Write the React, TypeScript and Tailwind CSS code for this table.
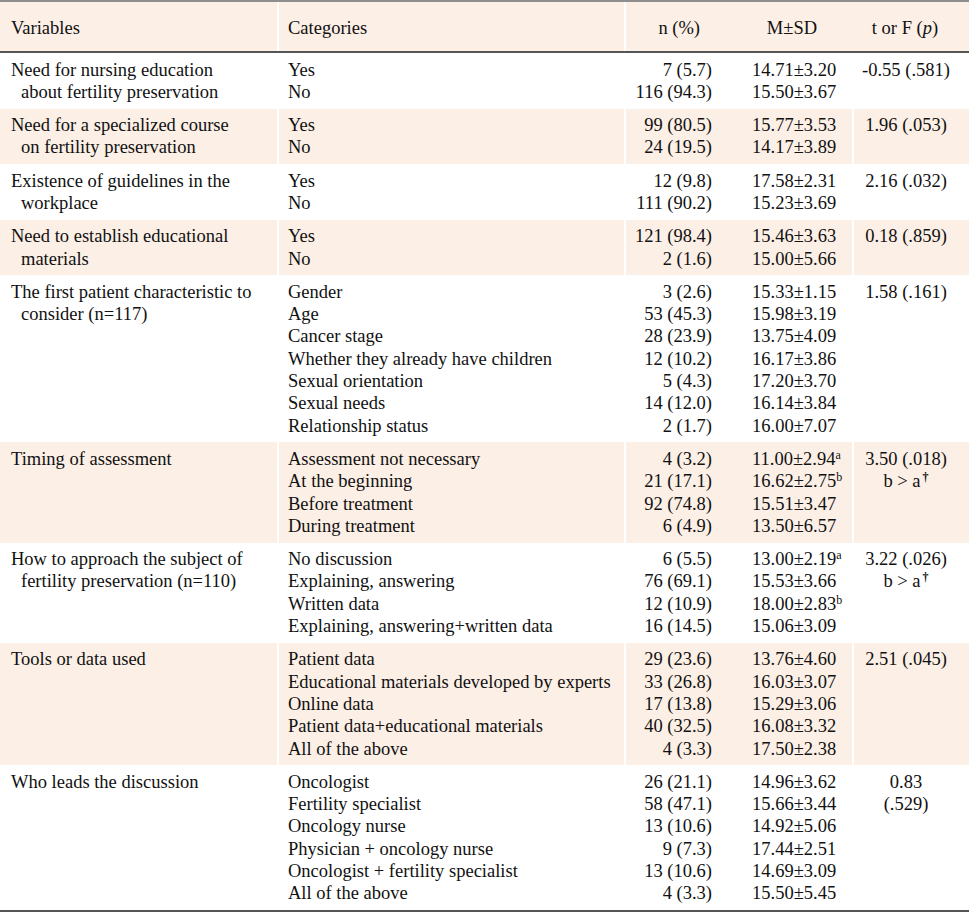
import React from "react";

type Row = {
  variable: string[];
  categories: string[];
  n: string[];
  msd: { v: string; sup?: string }[];
  stat: React.ReactNode;
};

const Dagger = () => <sup className="text-[12px] ml-[2px] font-bold">†</sup>;

const rows: Row[] = [
  {
    variable: ["Need for nursing education", "about fertility preservation"],
    categories: ["Yes", "No"],
    n: ["7 (5.7)", "116 (94.3)"],
    msd: [{ v: "14.71±3.20" }, { v: "15.50±3.67" }],
    stat: "-0.55 (.581)",
  },
  {
    variable: ["Need for a specialized course", "on fertility preservation"],
    categories: ["Yes", "No"],
    n: ["99 (80.5)", "24 (19.5)"],
    msd: [{ v: "15.77±3.53" }, { v: "14.17±3.89" }],
    stat: "1.96 (.053)",
  },
  {
    variable: ["Existence of guidelines in the", "workplace"],
    categories: ["Yes", "No"],
    n: ["12 (9.8)", "111 (90.2)"],
    msd: [{ v: "17.58±2.31" }, { v: "15.23±3.69" }],
    stat: "2.16 (.032)",
  },
  {
    variable: ["Need to establish educational", "materials"],
    categories: ["Yes", "No"],
    n: ["121 (98.4)", "2 (1.6)"],
    msd: [{ v: "15.46±3.63" }, { v: "15.00±5.66" }],
    stat: "0.18 (.859)",
  },
  {
    variable: ["The first patient characteristic to", "consider (n=117)"],
    categories: [
      "Gender",
      "Age",
      "Cancer stage",
      "Whether they already have children",
      "Sexual orientation",
      "Sexual needs",
      "Relationship status",
    ],
    n: ["3 (2.6)", "53 (45.3)", "28 (23.9)", "12 (10.2)", "5 (4.3)", "14 (12.0)", "2 (1.7)"],
    msd: [
      { v: "15.33±1.15" },
      { v: "15.98±3.19" },
      { v: "13.75±4.09" },
      { v: "16.17±3.86" },
      { v: "17.20±3.70" },
      { v: "16.14±3.84" },
      { v: "16.00±7.07" },
    ],
    stat: "1.58 (.161)",
  },
  {
    variable: ["Timing of assessment"],
    categories: ["Assessment not necessary", "At the beginning", "Before treatment", "During treatment"],
    n: ["4 (3.2)", "21 (17.1)", "92 (74.8)", "6 (4.9)"],
    msd: [{ v: "11.00±2.94", sup: "a" }, { v: "16.62±2.75", sup: "b" }, { v: "15.51±3.47" }, { v: "13.50±6.57" }],
    stat: (
      <>
        <div>3.50 (.018)</div>
        <div>
          b &gt; a<Dagger />
        </div>
      </>
    ),
  },
  {
    variable: ["How to approach the subject of", "fertility preservation (n=110)"],
    categories: ["No discussion", "Explaining, answering", "Written data", "Explaining, answering+written data"],
    n: ["6 (5.5)", "76 (69.1)", "12 (10.9)", "16 (14.5)"],
    msd: [{ v: "13.00±2.19", sup: "a" }, { v: "15.53±3.66" }, { v: "18.00±2.83", sup: "b" }, { v: "15.06±3.09" }],
    stat: (
      <>
        <div>3.22 (.026)</div>
        <div>
          b &gt; a<Dagger />
        </div>
      </>
    ),
  },
  {
    variable: ["Tools or data used"],
    categories: [
      "Patient data",
      "Educational materials developed by experts",
      "Online data",
      "Patient data+educational materials",
      "All of the above",
    ],
    n: ["29 (23.6)", "33 (26.8)", "17 (13.8)", "40 (32.5)", "4 (3.3)"],
    msd: [{ v: "13.76±4.60" }, { v: "16.03±3.07" }, { v: "15.29±3.06" }, { v: "16.08±3.32" }, { v: "17.50±2.38" }],
    stat: "2.51 (.045)",
  },
  {
    variable: ["Who leads the discussion"],
    categories: [
      "Oncologist",
      "Fertility specialist",
      "Oncology nurse",
      "Physician + oncology nurse",
      "Oncologist + fertility specialist",
      "All of the above",
    ],
    n: ["26 (21.1)", "58 (47.1)", "13 (10.6)", "9 (7.3)", "13 (10.6)", "4 (3.3)"],
    msd: [
      { v: "14.96±3.62" },
      { v: "15.66±3.44" },
      { v: "14.92±5.06" },
      { v: "17.44±2.51" },
      { v: "14.69±3.09" },
      { v: "15.50±5.45" },
    ],
    stat: (
      <>
        <div>0.83</div>
        <div>(.529)</div>
      </>
    ),
  },
];

const grid = "grid grid-cols-[277px_347px_114px_114px_117px]";

export default function App() {
  return (
    <div
      className="w-[969px] bg-white text-[#111111] text-[18.5px] leading-[22.3px]"
      style={{ fontFamily: '"Liberation Serif", serif' }}
    >
      <div className="border-t-2 border-[#8e8e8e] border-b-2 border-b-[#555555]">
        <div className={`${grid} bg-[#fcefe6] h-[49px] items-center`}>
          <div className="pl-[11px] pt-[3px]">Variables</div>
          <div className="pl-[9px] pt-[3px] h-full flex items-center border-l-2 border-white">Categories</div>
          <div className="pr-[38px] pt-[3px] h-full flex items-center justify-end border-l-2 border-white">
            n (%)
          </div>
          <div className="text-center pt-[3px] pr-[6px]">M±SD</div>
          <div className="text-center pt-[3px] pr-[11px]">
            t or F (<i>p</i>)
          </div>
        </div>
      </div>
      <div className="border-b-2 border-[#555555]">
        {rows.map((r, i) => (
          <div key={i} className={`${grid} ${i % 2 === 1 ? "bg-[#fcefe6]" : "bg-white"}`}>
            <div className="pl-[11px] py-[5.5px]">
              {r.variable.map((t, j) => (
                <div key={j} className={j > 0 ? "pl-[10px]" : ""}>
                  {t}
                </div>
              ))}
            </div>
            <div className="pl-[9px] py-[5.5px] border-l-2 border-white whitespace-nowrap">
              {r.categories.map((t, j) => (
                <div key={j}>{t}</div>
              ))}
            </div>
            <div className="pr-[26px] py-[5.5px] text-right border-l-2 border-white whitespace-nowrap">
              {r.n.map((t, j) => (
                <div key={j}>{t}</div>
              ))}
            </div>
            <div className="pl-[14px] py-[5.5px] whitespace-nowrap">
              {r.msd.map((m, j) => (
                <div key={j}>
                  {m.v}
                  {m.sup && <sup className="text-[12px]">{m.sup}</sup>}
                </div>
              ))}
            </div>
            <div className="pr-[11px] py-[5.5px] text-center border-l-2 border-white whitespace-nowrap">
              {r.stat}
            </div>
          </div>
        ))}
      </div>
    </div>
  );
}
